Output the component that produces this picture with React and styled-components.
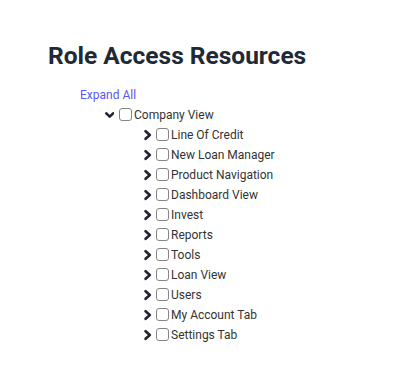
import styled, { createGlobalStyle } from 'styled-components';

const GlobalStyle = createGlobalStyle`
  body {
    margin: 0;
    background: #fff;
    font-family: Roboto, "Liberation Sans", Arial, sans-serif;
  }
`;

const Page = styled.section`
  padding: 40px 48px;
`;

const Title = styled.h1`
  margin: 0 0 13px;
  font-size: 24.5px;
  font-weight: 700;
  line-height: 32px;
  color: #212936;
`;

const Tree = styled.div`
  padding-left: 32px;
`;

const ExpandLink = styled.a`
  display: block;
  font-size: 12px;
  line-height: 20px;
  color: #5a55f5;
  cursor: pointer;
`;

const Node = styled.ul`
  list-style: none;
  margin: 0;
  padding: 0 0 0 ${(p) => p.$indent}px;
`;

const Row = styled.li`
  display: flex;
  align-items: center;
  height: 20px;
  font-size: 12px;
  color: #333;
`;

const Toggle = styled.span`
  display: flex;
  align-items: center;
  width: ${(p) => (p.$open ? 14 : 12)}px;
  height: 20px;
  color: #1f2430;
`;

const Box = styled.span`
  width: 11px;
  height: 11px;
  border: 1px solid #858585;
  border-radius: 3px;
  margin-right: 2px;
  margin-top: -2px;
  box-sizing: content-box;
`;

const Chevron = ({ open }) => (
  <svg width="9" height="12" viewBox="0 0 9 12">
    <path
      d={open ? 'M1.3 4.3l3.4 3.4 3.4-3.4' : 'M1.6 2.2l4.2 3.8-4.2 3.8'}
      fill="none"
      stroke="currentColor"
      strokeWidth="2.6"
      strokeLinecap="round"
      strokeLinejoin="round"
    />
  </svg>
);

const children = [
  'Line Of Credit',
  'New Loan Manager',
  'Product Navigation',
  'Dashboard View',
  'Invest',
  'Reports',
  'Tools',
  'Loan View',
  'Users',
  'My Account Tab',
  'Settings Tab'
];

export default function App() {
  return (
    <>
      <GlobalStyle />
      <Page>
        <Title>Role Access Resources</Title>
        <Tree>
          <ExpandLink>Expand All</ExpandLink>
          <Node $indent={25}>
            <Row>
              <Toggle $open>
                <Chevron open />
              </Toggle>
              <Box />
              Company View
            </Row>
            <Node $indent={39}>
              {children.map((name) => (
                <Row key={name}>
                  <Toggle>
                    <Chevron />
                  </Toggle>
                  <Box />
                  {name}
                </Row>
              ))}
            </Node>
          </Node>
        </Tree>
      </Page>
    </>
  );
}
